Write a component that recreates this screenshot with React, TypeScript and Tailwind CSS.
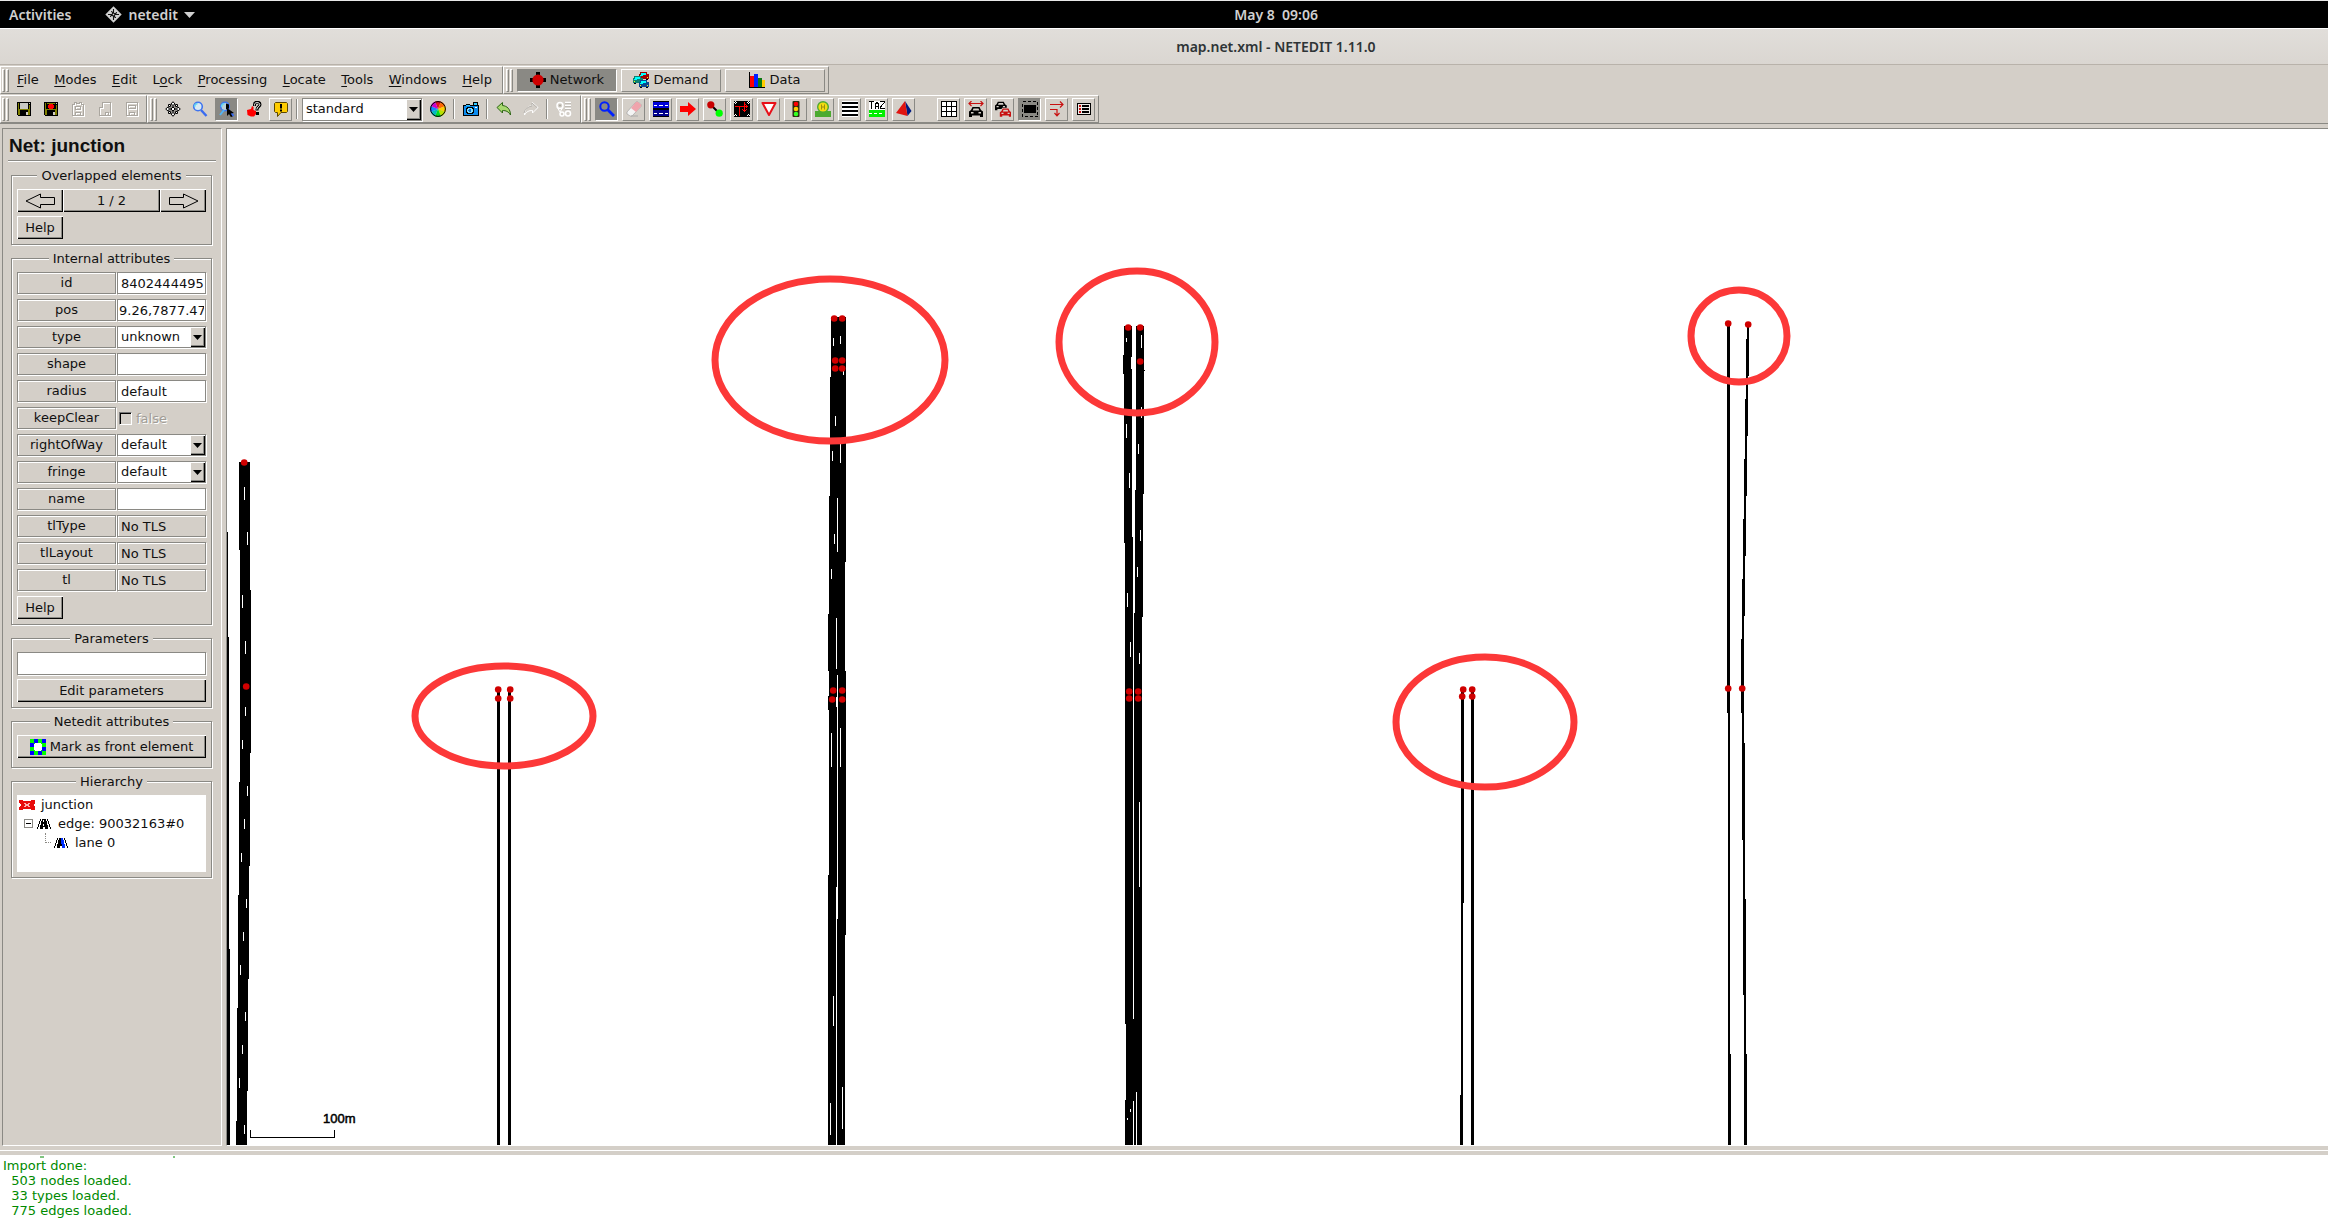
import React from "react";

type Kids = { children?: React.ReactNode };
type Box = [number, number, number, number];
type Edge = [number, number][];

const groove = "border border-[#8a8984] shadow-[inset_1px_1px_0_#fff,1px_1px_0_#fff]";
const sunken = "border border-[#8a8984] shadow-[1px_1px_0_#fff]";
const raised =
  "bg-[#d4cfc8] shadow-[inset_1px_1px_0_#fff,inset_-1px_-1px_0_#000,inset_-2px_-2px_0_#8a8984]";
const bar =
  "flex items-center border border-t-white border-l-white border-r-[#8a8984] border-b-[#8a8984] h-7";

/* ---------- icons ---------- */

function Ico({ children, w = 16, h = 16, smooth = false }: Kids & { w?: number; h?: number; smooth?: boolean }) {
  return (
    <svg
      width={w}
      height={h}
      viewBox={`0 0 ${w} ${h}`}
      shapeRendering={smooth ? "auto" : "crispEdges"}
      fill="none"
      className="shrink-0"
      aria-hidden="true"
    >
      {children}
    </svg>
  );
}

const SaveIcon = ({ red = false }: { red?: boolean }) => (
  <Ico>
    <path d="M1 1h14v14H2l-1-1z" fill="#000" />
    <path d="M2 2h1v12H2zM13 4h1v10h-1zM3 8h10v1H3zM3 9h1v5H3zM12 9h1v5h-1z" fill="#808000" />
    <path d="M4 2h8v6H4z" fill={red ? "#808000" : "#c9c9c4"} />
    {red && <path d="M4 3h2v1h4V3h2v5h-2V7H6v1H4z" fill="#000" />}
    {red && <path d="M6 3h4v1h1v3h-1v1H6V7H5V4h1z" fill="#f00" />}
    <path d="M10 11h2v3h-2z" fill="#d4cfc8" />
    <path d="M13 2h1v1h-1z" fill="#c9c9c4" />
  </Ico>
);

const ghostShapes = [
  "M2.5 3.5h2v-2h2v1h3v-1h2v2h2v11h-11zM5.5 5.5h5v3h-5zM5.5 14v-3h5v3",
  "M5.5 1.5h8v13h-11v-8h3zM8.5 13.5v-2h3v2",
  "M2.5 1.5h11v13h-11zM4.5 4.5h7v3h-7zM5.5 14v-3h5v3",
];

const GhostSave = ({ kind }: { kind: number }) => (
  <Ico>
    <path d={ghostShapes[kind]} stroke="#fff" transform="translate(1 1)" />
    <path d={ghostShapes[kind]} stroke="#aaa69f" />
  </Ico>
);

const MoveIcon = () => (
  <Ico smooth>
    <g fill="#fff" stroke="#000">
      <path d="M3.500 3.500h2v2h-2zM10.500 3.500h2v2h-2zM3.500 10.500h2v2h-2zM10.500 10.500h2v2h-2z" />
      <path d="M8 .7l2 2.300-1.200.5V6.500h-1.600V3.500L6 3zM8 15.300L10 13l-1.200-.5V9.500h-1.600v3L6 13zM.7 8L3 6l.5 1.200h3v1.600h-3L3 10zM15.300 8L13 6l-.5 1.200h-3v1.600h3L13 10z" />
      <path d="M8 6l2 2-2 2-2-2z" />
    </g>
  </Ico>
);

const LensIcon = ({ arrow = false }: { arrow?: boolean }) => (
  <Ico smooth>
    <path d="M9 9l5.500 6" stroke="#3a6cf0" strokeWidth="2.400" />
    <circle cx="6" cy="5.500" r="4.300" fill={arrow ? "#bcd0d8" : "#d8eaf4"} stroke="#3f74ee" strokeWidth="1.600" />
    <path d="M2.500 6a3.500 3.500 0 0 1 3-3.500" stroke="#62d4f4" strokeWidth="1.500" />
    {arrow && <path d="M1 14l4-5" stroke="#52b4f4" strokeWidth="2" />}
    {arrow && <path d="M7 2.500l3 1v4l-3 1z" fill="#000" />}
    {arrow && <path d="M8 7l7 5-3.300.5 2 3-1.800.5-1.900-3L8 15z" fill="#000" />}
  </Ico>
);

const QuestionIcon = () => (
  <Ico smooth>
    <path d="M8.500 5V3.500c0-3 5.500-3 5.500 0 0 2-3 2.500-3 5v1" stroke="#000" strokeWidth="3" />
    <path d="M8.500 4.500V3.500c0-2.500 5.300-2.500 5.300 0 0 2-3 2.500-3 5" stroke="#fff" strokeWidth="1" />
    <rect x="10" y="11" width="3" height="3" fill="#000" />
    <path d="M1 9l4-1 1-3 1.500 1v3L10 10v3l-2 2.500H5L1.500 14z" fill="#f00" />
  </Ico>
);

const MessageIcon = () => (
  <Ico smooth>
    <path d="M2.500 1.500h11l1 1v8l-1 1H8l-3.500 4v-4h-2l-1-1v-8z" fill="#fc0" stroke="#5a4600" />
    <path d="M7 3h2v4.500H7zM7 8.500h2v2H7z" fill="#000" />
  </Ico>
);

const wheel: [string, string][] = [
  ["M8 8L5 .6A8 8 0 0 1 11 .6z", "#e01020"],
  ["M8 8L11 .6A8 8 0 0 1 15.400 5z", "#f60"],
  ["M8 8L15.400 5A8 8 0 0 1 15.400 11z", "#fc0"],
  ["M8 8L15.400 11A8 8 0 0 1 11 15.400z", "#b8e000"],
  ["M8 8L11 15.400A8 8 0 0 1 5 15.400z", "#0d2"],
  ["M8 8L5 15.400A8 8 0 0 1 .6 11z", "#0bb"],
  ["M8 8L.6 11A8 8 0 0 1 .6 5z", "#18f"],
  ["M8 8L.6 5A8 8 0 0 1 5 .6z", "#c0c"],
];

const WheelIcon = () => (
  <Ico smooth>
    {wheel.map(([d, c]) => (
      <path key={c} d={d} fill={c} />
    ))}
    <circle cx="8" cy="8" r="7.400" stroke="#000" />
  </Ico>
);

const CameraIcon = () => (
  <Ico>
    <path d="M0 4h3V3h4v1h3V1h5v3h1v11H0z" fill="#000" />
    <path d="M1 5h14v9H1z" fill="#0a8cf0" />
    <path d="M11 2h3v2h-3zM3 4h4v1H3z" fill="#30c8ff" />
    <circle cx="7" cy="9.500" r="4" fill="#000" />
    <circle cx="7" cy="9.500" r="3" fill="#7fe0ff" />
    <circle cx="7" cy="9.500" r="1.500" fill="#0a6cd0" />
    <path d="M12 6h2v1h-2z" fill="#fff" />
  </Ico>
);

const UndoIcon = ({ ghost = false }: { ghost?: boolean }) => (
  <Ico smooth>
    <path
      d={
        ghost
          ? "M15 6.500L9.500 1.500v3C5 5 1.500 8 1.500 14c2-3.500 4.500-4.500 8-4.500v2.500z"
          : "M1 6.500L6.500 1.500v3c4.500.5 8 3.500 8 9.500-2-3.500-4.500-4.500-8-4.500v2.500z"
      }
      fill={ghost ? "#d4cfc8" : "#a8d870"}
      stroke={ghost ? "#fff" : "#2c6414"}
    />
    {ghost && <path d="M14 6.500L9 2v3C5 5.500 2 8 1 12" stroke="#b4b0aa" />}
  </Ico>
);

const GearsIcon = () => (
  <Ico smooth>
    <circle cx="4" cy="4.500" r="3" stroke="#fff" strokeWidth="1.500" />
    <circle cx="4" cy="4.500" r="1" fill="#aaa6a0" />
    <path d="M1 6l3 5 3-5" stroke="#fff" />
    <circle cx="12" cy="12.500" r="2.500" stroke="#fff" strokeWidth="1.500" />
    <circle cx="6" cy="13" r="2" stroke="#fff" strokeWidth="1.500" />
    <path d="M9 1.500h6M9 4.500h6M9 7.500h6" stroke="#fff" strokeWidth="1.500" />
    <path d="M9 2.500h6M9 5.500h6M9 8.500h6" stroke="#aaa6a0" strokeWidth=".6" />
  </Ico>
);

const InspectIcon = () => (
  <Ico smooth>
    <circle cx="5.500" cy="5.500" r="4.200" stroke="#0020ff" strokeWidth="2" />
    <path d="M8.500 8.500l6.500 6.500" stroke="#0020ff" strokeWidth="2.800" />
  </Ico>
);

const EraserIcon = () => (
  <Ico smooth>
    <path
      d="M1 11L9.500 1.500c1-1 2-1 3 0l2 1.500c1 1 1 2 0 3L6.500 14.500c-.8.800-2 .8-3 0L1 13z"
      fill="#f4f4f4"
      stroke="#999"
      strokeWidth=".6"
    />
    <path d="M5 7l4.500-5.500c1-1 2-1 3 0l2 1.500c1 1 1 2 0 3L10 11z" fill="#f0a4ac" />
    <path d="M5 15h7" stroke="#aaa" />
  </Ico>
);

const EdgeIcon = () => (
  <Ico>
    <rect width="16" height="16" fill="#000" />
    <path d="M0 1h16v6H0z" fill="#0000d8" />
    <path d="M0 9h16v6H0z" fill="#00008c" />
    <path d="M1 4h3v1H1zM6 4h4v1H6zM12 4h3v1h-3zM1 12h3v1H1zM6 12h4v1H6zM12 12h3v1h-3z" fill="#fff" />
  </Ico>
);

const ArrowIcon = () => (
  <Ico smooth>
    <path d="M0 5h8V1l8 7-8 7v-4H0z" fill="#f00" />
  </Ico>
);

const ConnectIcon = () => (
  <Ico smooth>
    <path d="M4 4l8 8" stroke="#000" strokeWidth="2" />
    <circle cx="3.800" cy="3.800" r="3.600" fill="#c80000" />
    <circle cx="12.200" cy="12.200" r="3.600" fill="#0f0" />
  </Ico>
);

const ProhibitIcon = () => (
  <Ico>
    <path d="M0 0h16v16H0z" fill="#000" />
    <path
      d="M1 0h1v1H1zM0 1h1v1H0zM2 1h1v1H2zM1 2h1v1H1zM14 0h1v1h-1zM13 1h1v1h-1zM15 1h1v1h-1zM14 2h1v1h-1zM1 13h1v1H1zM0 14h1v1H0zM2 14h1v1H2zM14 13h1v1h-1zM13 14h1v1h-1zM15 14h1v1h-1z"
      fill="#fff"
    />
    <path d="M1 5.500h13M11.500 3.500l2 2-2 2M5.500 15V6M10.500 1v9M8.500 8.500l2 2 2-2" stroke="#f00" />
  </Ico>
);

const YieldIcon = () => (
  <Ico smooth>
    <path d="M1.500 2h13L8 14z" fill="#fff" stroke="#e81018" strokeWidth="2" strokeLinejoin="round" />
  </Ico>
);

const LightIcon = () => (
  <Ico smooth>
    <rect x="4.500" width="7" height="16" rx="1" fill="#2a2a10" />
    <circle cx="8" cy="3" r="2.300" fill="#f00" />
    <circle cx="8" cy="8" r="2.300" fill="#fc0" />
    <circle cx="8" cy="13" r="2.300" fill="#3f2" />
  </Ico>
);

const StopIcon = () => (
  <Ico smooth>
    <path d="M0 10h16v6H0z" fill="#4caa30" />
    <circle cx="8" cy="6" r="6" fill="#4caa30" />
    <circle cx="8" cy="6" r="4.600" fill="#f4dc10" />
    <path d="M6.500 3.500v5M9.500 3.500v5M6.500 6h3" stroke="#9c9010" />
  </Ico>
);

const LinesIcon = () => (
  <Ico>
    <rect width="16" height="16" fill="#fff" />
    <path d="M0 1h16v2H0zM0 5h16v2H0zM0 9h16v2H0zM0 13h16v2H0z" fill="#000" />
  </Ico>
);

const TazIcon = () => (
  <Ico>
    <rect width="16" height="16" fill="#fff" />
    <path d="M0 .5h5M2.500 1v7M6.500 8V3.500l1-2h1l1 2V8M6.500 5.500h3M11 .5h4.500v1L11.500 6v1.500H16" stroke="#000" />
    <path d="M0 9h16v7H0z" fill="#0e0" />
    <path d="M0 12h3v1H0zM5 12h3v1H5zM10 12h3v1h-3z" fill="#fff" />
  </Ico>
);

const ShapeIcon = () => (
  <Ico smooth>
    <path d="M9 0l6.500 10-4 5z" fill="#001a80" />
    <path d="M9 0L0 12l11.500 3z" fill="#e01410" />
  </Ico>
);

const GridIcon = () => (
  <Ico>
    <rect x=".5" y=".5" width="15" height="15" fill="#fff" stroke="#000" />
    <path d="M5.500 0v16M10.500 0v16M0 5.500h16M0 10.500h16" stroke="#000" />
  </Ico>
);

const CarPath =
  "M1 15V9.500L3 8l1.500-3h7L13 8l2 1.500V15h-3v-1.500H4V15zM5.500 6.500L4.700 8.500h6.600l-.8-2zM3 10v1.500h2.500V10zM10.500 10v1.500H13V10z";

const LaneCarIcon = () => (
  <Ico smooth>
    <path d="M1 2.500h14M3.500 0L1 2.500 3.500 5M12.500 0L15 2.500 12.500 5" stroke="#c81010" strokeWidth="1.200" />
    <path d={CarPath} transform="translate(0 1)" fill="#000" fillRule="evenodd" />
  </Ico>
);

const TwoCarsIcon = () => (
  <Ico smooth>
    <path d={CarPath} transform="translate(-1 -3.500) scale(.85)" fill="#000" fillRule="evenodd" />
    <path d={CarPath} transform="translate(4 3.500) scale(.82)" fill="#d4cfc8" stroke="#d4cfc8" strokeWidth="2" />
    <path d={CarPath} transform="translate(4 3.500) scale(.82)" fill="#c81010" fillRule="evenodd" />
  </Ico>
);

const SelectIcon = () => (
  <Ico>
    <rect x=".5" y=".5" width="15" height="15" stroke="#000" strokeDasharray="3 2" />
    <rect x="2" y="4" width="12" height="8" fill="#000" />
  </Ico>
);

const TurnIcon = () => (
  <Ico smooth>
    <path d="M1 3.500h13M11 .5l3 3-3 3M1 8.500h7v6M5.500 12L8 14.800l2.500-2.800" stroke="#c81010" strokeWidth="1.200" />
  </Ico>
);

const ListIcon = () => (
  <Ico>
    <path d="M1 2h14v12H1z" fill="#000" />
    <path d="M2 3h12v10H2z" fill="#f0ece8" />
    <path d="M3 4h2v2H3zM3 7h2v2H3zM3 10h2v2H3z" fill="#c81010" />
    <path d="M6 4h7v2H6zM6 7h7v2H6zM6 10h7v2H6z" fill="#000" />
  </Ico>
);

const NetworkIcon = () => (
  <Ico smooth>
    <path d="M6 0h4v16H6zM0 6h16v4H0z" fill="#000" />
    <circle cx="8" cy="8" r="5.600" fill="#d00000" />
  </Ico>
);

const MiniCar = ({ x, y, c }: { x: number; y: number; c: string }) => (
  <g transform={`translate(${x} ${y})`}>
    <path d="M1 0h7v2h2v5H9v1H7V7H3v1H1V7H0V2h1z" fill={c} />
    <path d="M2 1h5v2H2zM1 3h3v1H1z" fill="#0ff" />
    <path d="M1 5h1v1H1zM8 5h1v1H8z" fill="#ff0" />
    <path d="M1 7h2v1H1zM7 7h2v1H7z" fill="#000" />
  </g>
);

const DemandIcon = () => (
  <Ico>
    <MiniCar x={6} y={0} c="#a00000" />
    <MiniCar x={0} y={4} c="#0c8070" />
    <MiniCar x={6} y={8} c="#0c4890" />
  </Ico>
);

const DataIcon = () => (
  <Ico>
    <path d="M1 4h4v11H1z" fill="#f00" />
    <path d="M5 2h4v13H5z" fill="#0020ff" />
    <path d="M9 6h4v9H9z" fill="#0a7a10" />
    <path d="M13 8h3v7h-3z" fill="#fc0" />
    <path d="M.5 0v15.500H16" stroke="#000" />
  </Ico>
);

const FrontIcon = () => (
  <Ico>
    <path d="M0 0h16v16H0z" fill="#0f0" />
    <path d="M4 0h4v4H4zM12 0h4v4h-4zM0 4h4v4H0zM12 8h4v4h-4zM0 12h4v4H0zM8 12h4v4H8z" fill="#00f" />
    <path d="M5 4h6v1h1v6h-1v1H5v-1H4V5h1z" fill="#fff" />
  </Ico>
);

const JunctionIcon = () => (
  <Ico h={12}>
    <path d="M0 1h3l2 1h6l2-1h3v3l-2 2 2 2v3h-3l-2-1H5l-2 1H0V8l2-2-2-2z" fill="#e80c0c" />
    <path d="M5 4l6 4M11 4L5 8" stroke="#ffb0b0" />
    <path d="M0 5h1v2H0zM15 5h1v2h-1z" fill="#fff" />
  </Ico>
);

const RoadIcon = ({ lane = false }: { lane?: boolean }) => (
  <Ico w={14} h={12}>
    <path d="M3 1h1v2H3v3H2v3H1v2H0V9h1V6h1V3h1zM10 1h1v2h1v3h1v3h1v2h-1V9h-1V6h-1V3h-1z" fill="#000" />
    <path d="M5 1h4v2h1v4h1v4H8V9H6v2H3V7h1V3h1z" fill="#000" />
    {lane && <path d="M7 1h2v2h1v4h1v4H8V7H7z" fill="#0030ff" />}
    {!lane && <path d="M6 2h1v2H6zM6 6h1v2H6z" fill="#fff" />}
  </Ico>
);

const Caret = () => (
  <svg width="9" height="5" viewBox="0 0 9 5" aria-hidden="true">
    <path d="M0 0h9L4.500 5z" fill="#000" />
  </svg>
);

const BigArrow = ({ flip = false }: { flip?: boolean }) => (
  <svg width="31" height="16" viewBox="0 0 31 16" className={flip ? "-scale-x-100" : ""} aria-hidden="true">
    <path d="M1 8L15.500 1v3.500h14v7h-14V15z" fill="none" stroke="#000" />
  </svg>
);

/* ---------- tool bars ---------- */

const Grip = () => (
  <div className="flex h-[23px] shrink-0 gap-px">
    <span className="w-[3px] border border-t-white border-l-white border-r-[#8a8984] border-b-[#8a8984]" />
    <span className="w-[3px] border border-t-white border-l-white border-r-[#8a8984] border-b-[#8a8984]" />
  </div>
);

const Sep = () => <span className="h-5 w-0.5 border-l border-[#8a8984] bg-white" />;

type ToolProps = Kids & { label: string; look?: "flat" | "up" | "down" };

function Tool({ label, look = "flat", children }: ToolProps) {
  const style =
    look === "down"
      ? "bg-[#8a8984] border-t-[#8a8984] border-l-[#8a8984] border-r-white border-b-white"
      : look === "up"
        ? "border-t-white border-l-white border-r-[#8a8984] border-b-[#8a8984]"
        : "border-transparent";
  return (
    <button type="button" aria-label={label} className={`flex size-[23px] shrink-0 items-center justify-center border ${style}`}>
      {children}
    </button>
  );
}

const menus: [string, string, string][] = [
  ["", "F", "ile"],
  ["", "M", "odes"],
  ["", "E", "dit"],
  ["L", "o", "ck"],
  ["", "P", "rocessing"],
  ["", "L", "ocate"],
  ["", "T", "ools"],
  ["", "W", "indows"],
  ["", "H", "elp"],
];

function ModeTab({ label, active = false, children }: Kids & { label: string; active?: boolean }) {
  return (
    <button
      type="button"
      className={`flex h-[23px] w-[100px] items-center justify-center gap-1 border ${
        active
          ? "border-t-[#8a8984] border-l-[#8a8984] border-r-white border-b-white bg-[#8a8984]"
          : "border-t-white border-l-white border-r-[#8a8984] border-b-[#8a8984]"
      }`}
    >
      {children}
      {label}
    </button>
  );
}

const modes: [string, React.ReactNode][] = [
  ["Inspect", <InspectIcon />],
  ["Delete", <EraserIcon />],
  ["Edge", <EdgeIcon />],
  ["Move", <ArrowIcon />],
  ["Connection", <ConnectIcon />],
  ["Prohibition", <ProhibitIcon />],
  ["Crossing priority", <YieldIcon />],
  ["Traffic light", <LightIcon />],
  ["Additional", <StopIcon />],
  ["Crossing", <LinesIcon />],
  ["TAZ", <TazIcon />],
  ["Shape", <ShapeIcon />],
];

const toggles: [string, React.ReactNode][] = [
  ["Grid", <GridIcon />],
  ["Draw spread", <LaneCarIcon />],
  ["Show demand", <TwoCarsIcon />],
  ["Select edges", <SelectIcon />],
  ["Show connections", <TurnIcon />],
  ["Show additionals", <ListIcon />],
];

function Toolbars() {
  return (
    <nav className="flex flex-col gap-px border-b border-[#8a8984] pt-px">
      <div className="flex">
        <div className={`${bar} w-[503px] pl-px`}>
          <Grip />
          <div className="flex grow justify-between pr-2.5 pl-2">
            {menus.map(([a, b, c]) => (
              <button type="button" key={b + c}>
                {a}
                <span className="underline underline-offset-2">{b}</span>
                {c}
              </button>
            ))}
          </div>
        </div>
        <div className={`${bar} gap-1 pr-[3px] pl-0.5`}>
          <Grip />
          <ModeTab label="Network" active><NetworkIcon /></ModeTab>
          <ModeTab label="Demand"><DemandIcon /></ModeTab>
          <ModeTab label="Data"><DataIcon /></ModeTab>
        </div>
      </div>
      <div className="flex">
        <div className={`${bar} gap-[3px] pr-[3px] pl-px`}>
          <Grip />
          <div className="flex gap-1">
            <Tool label="Save network"><SaveIcon /></Tool>
            <Tool label="Save as"><SaveIcon red /></Tool>
            <Tool label="Save additionals"><GhostSave kind={0} /></Tool>
            <Tool label="Save demand"><GhostSave kind={1} /></Tool>
            <Tool label="Save data"><GhostSave kind={2} /></Tool>
          </div>
        </div>
        <div className={`${bar} gap-1 pr-[5px] pl-0.5`}>
          <Grip />
          <div className="flex items-center gap-1">
            <Tool label="Recenter"><MoveIcon /></Tool>
            <Tool label="Zoom style"><LensIcon /></Tool>
            <Tool label="Object tooltip" look="down"><LensIcon arrow /></Tool>
            <Tool label="Locate"><QuestionIcon /></Tool>
            <Tool label="Messages" look="up"><MessageIcon /></Tool>
            <Sep />
            <Combo label="View scheme" value="standard" wide />
            <Tool label="Colors"><WheelIcon /></Tool>
            <Sep />
            <Tool label="Snapshot"><CameraIcon /></Tool>
            <Sep />
            <Tool label="Undo"><UndoIcon /></Tool>
            <Tool label="Redo"><UndoIcon ghost /></Tool>
            <Sep />
            <Tool label="Compute"><GearsIcon /></Tool>
          </div>
        </div>
        <div className={`${bar} gap-1 pr-[3px] pl-0.5`}>
          <Grip />
          <div className="flex gap-1">
            {modes.map(([label, icon], i) => (
              <Tool key={label} label={label} look={i === 0 ? "down" : "up"}>{icon}</Tool>
            ))}
            <span className="w-3.5" />
            {toggles.map(([label, icon], i) => (
              <Tool key={label} label={label} look={i === 3 ? "down" : "up"}>{icon}</Tool>
            ))}
          </div>
        </div>
      </div>
    </nav>
  );
}

/* ---------- side panel ---------- */

function Combo({ id, label, value, wide = false }: { id?: string; label?: string; value: string; wide?: boolean }) {
  return (
    <div className={`relative flex bg-white ${sunken} ${wide ? "h-[23px] w-[120px]" : "h-[22px] w-full"}`}>
      <select id={id} aria-label={label} defaultValue={value} className="w-full appearance-none bg-transparent pl-[3px] outline-none">
        <option>{value}</option>
      </select>
      <span className={`pointer-events-none absolute inset-y-0 right-0 flex w-[15px] items-center justify-center ${raised}`}>
        <Caret />
      </span>
    </div>
  );
}

function Group({ title, children }: Kids & { title: string }) {
  return (
    <fieldset className={`min-w-0 px-[5px] pt-[6px] pb-[5px] ${groove}`}>
      <legend className="mx-auto h-4 bg-[#d4cfc8] px-1 leading-[18px]">{title}</legend>
      <div className="flex flex-col gap-1">{children}</div>
    </fieldset>
  );
}

const PushButton = ({ children, width = "w-full", label }: Kids & { width?: string; label?: string }) => (
  <button type="button" aria-label={label} className={`flex h-[23px] items-center justify-center gap-1 ${width} ${raised}`}>
    {children}
  </button>
);

type Attr = { name: string; kind: "text" | "select" | "check" | "fixed"; value: string };

const attrs: Attr[] = [
  { name: "id", kind: "text", value: "8402444495" },
  { name: "pos", kind: "text", value: "9.26,7877.47" },
  { name: "type", kind: "select", value: "unknown" },
  { name: "shape", kind: "text", value: "" },
  { name: "radius", kind: "text", value: "default" },
  { name: "keepClear", kind: "check", value: "false" },
  { name: "rightOfWay", kind: "select", value: "default" },
  { name: "fringe", kind: "select", value: "default" },
  { name: "name", kind: "text", value: "" },
  { name: "tlType", kind: "fixed", value: "No TLS" },
  { name: "tlLayout", kind: "fixed", value: "No TLS" },
  { name: "tl", kind: "fixed", value: "No TLS" },
];

function AttrRow({ name, kind, value }: Attr) {
  return (
    <div className="grid h-[23px] grid-cols-[99px_1fr] gap-px">
      <label htmlFor={`attr-${name}`} className={`flex h-[22px] items-center justify-center ${groove}`}>
        {name}
      </label>
      {kind === "select" && <Combo id={`attr-${name}`} value={value} />}
      {(kind === "text" || kind === "fixed") && (
        <input
          id={`attr-${name}`}
          defaultValue={value}
          readOnly={kind === "fixed"}
          className={`h-[22px] w-full min-w-0 outline-none ${kind === "fixed" ? groove : `bg-white ${sunken}`} ${
            name === "pos" ? "px-px text-right" : "pl-[3px]"
          }`}
        />
      )}
      {kind === "check" && (
        <span className="flex items-center gap-1 pl-0.5 text-[#a09c96] [text-shadow:1px_1px_0_#fff]">
          <input
            id={`attr-${name}`}
            type="checkbox"
            disabled
            className="size-[13px] appearance-none border border-t-[#777] border-l-[#777] border-r-white border-b-white bg-[#d4cfc8] shadow-[inset_1px_1px_0_#000]"
          />
          {value}
        </span>
      )}
    </div>
  );
}

function SidePanel() {
  return (
    <aside className="flex w-[220px] shrink-0 flex-col border border-t-[#8a8984] border-l-[#8a8984] border-r-white border-b-white px-[5px]">
      <h1 className="h-8 border-b border-[#8a8984] pl-px font-['Liberation_Sans',sans-serif] text-[19px] leading-[34px] font-bold shadow-[0_1px_0_#fff]">
        Net: junction
      </h1>
      <div className="flex flex-col gap-[5px] pt-[6px] pr-[4px] pl-[3px]">
        <Group title="Overlapped elements">
          <div className="flex">
            <PushButton width="w-[46px]" label="Previous element"><BigArrow /></PushButton>
            <PushButton width="grow">1 / 2</PushButton>
            <PushButton width="w-[46px]" label="Next element"><BigArrow flip /></PushButton>
          </div>
          <PushButton width="w-[46px]">Help</PushButton>
        </Group>
        <Group title="Internal attributes">
          {attrs.map((a) => (
            <AttrRow key={a.name} {...a} />
          ))}
          <PushButton width="w-[46px]">Help</PushButton>
        </Group>
        <Group title="Parameters">
          <input aria-label="Parameters" className={`h-[23px] w-full bg-white pl-[3px] outline-none ${sunken}`} />
          <PushButton>Edit parameters</PushButton>
        </Group>
        <Group title="Netedit attributes">
          <div className="pb-1">
            <PushButton>
              <FrontIcon />
              Mark as front element
            </PushButton>
          </div>
        </Group>
        <Group title="Hierarchy">
          <ul className="h-[77px] bg-white leading-[19px]">
            <li className="flex items-center gap-1.5 pl-0.5"><JunctionIcon />junction</li>
            <li className="flex items-center gap-1 pl-[7px]">
              <span className="flex size-[9px] items-center justify-center border border-[#8a8984]">
                <span className="h-px w-[5px] bg-black" />
              </span>
              <RoadIcon />
              <span className="pl-[3px]">edge: 90032163#0</span>
            </li>
            <li className="flex items-center gap-[7px] pl-[28px]">
              <span className="-mt-2.5 h-2.5 w-1.5 border-b border-l border-dotted border-[#8a8984]" />
              <span className="-ml-1"><RoadIcon lane /></span>
              lane 0
            </li>
          </ul>
        </Group>
      </div>
    </aside>
  );
}

/* ---------- network canvas ---------- */

/* Each band lists [x, yEnd] steps for its left and right border. */
function bandPath(top: number, left: Edge, right: Edge) {
  let d = `M${left[0][0]} ${top}`;
  left.forEach(([x, y]) => (d += `H${x}V${y}`));
  [...right].reverse().forEach(([x], i, all) => {
    const next = all[i + 1];
    const up = next ? right[right.length - 2 - i][1] : top;
    d += `H${x}V${up}`;
  });
  return d + "Z";
}

const bands: [number, Edge, Edge][] = [
  [532, [[227, 1145]], [[228, 637], [229, 949], [230, 1145]]],
  [
    462,
    [[239, 550], [240, 782], [239, 895], [238, 1008], [237, 1121], [236, 1145]],
    [[250, 590], [251, 753], [250, 866], [249, 979], [248, 1091], [247, 1145]],
  ],
  [689, [[497, 1145]], [[500, 1145]]],
  [689, [[508, 1145]], [[511, 1145]]],
  [
    317,
    [[831, 377], [830, 496], [829, 614], [828, 671], [829, 696], [828, 710], [829, 875], [828, 1145]],
    [[846, 562], [845, 671], [846, 935], [845, 1145]],
  ],
  [
    326,
    [[1124, 355], [1123, 374], [1124, 543], [1125, 1019]],
    [[1132, 357], [1131, 369], [1132, 537], [1133, 1019]],
  ],
  [326, [[1136, 490], [1135, 613], [1134, 1019]], [[1144, 494], [1143, 617], [1142, 1019]]],
  [1019, [[1125, 1024], [1126, 1100], [1125, 1145]], [[1142, 1145]]],
  [370, [[1144, 371]], [[1145, 371]]],
  [690, [[1461, 1095], [1460, 1145]], [[1464, 903], [1463, 1145]]],
  [690, [[1471, 1145]], [[1474, 1145]]],
  [324, [[1727, 713], [1728, 1145]], [[1730, 1054], [1731, 1145]]],
  [
    324,
    [[1747, 339], [1746, 399], [1745, 459], [1744, 519], [1743, 579], [1742, 639], [1741, 713], [1742, 840], [1743, 995], [1744, 1145]],
    [[1749, 376], [1748, 436], [1747, 496], [1746, 556], [1745, 616], [1744, 743], [1745, 899], [1746, 1054], [1747, 1145]],
  ],
];

/* Lane markings: x, y from, y to, width. */
const marks: Box[] = [
  [244, 487, 500, 1], [247, 532, 545, 1], [242, 595, 608, 1], [245, 641, 654, 1],
  [245, 707, 716, 1], [242, 740, 749, 1], [247, 786, 796, 1], [244, 819, 829, 1],
  [241, 853, 862, 1], [246, 899, 908, 1], [243, 932, 941, 1], [240, 965, 975, 1],
  [245, 1012, 1021, 1], [242, 1045, 1054, 1], [239, 1078, 1088, 1], [244, 1125, 1134, 1],
  [833, 338, 346, 1], [840, 336, 344, 1], [843, 371, 375, 1], [835, 416, 426, 1],
  [832, 451, 461, 1], [840, 444, 463, 1], [837, 498, 552, 1], [834, 534, 544, 1],
  [831, 569, 579, 1], [836, 618, 669, 1], [837, 675, 919, 1], [836, 697, 707, 2],
  [836, 887, 1145, 1], [831, 733, 767, 1], [840, 728, 767, 1], [833, 996, 1026, 1],
  [830, 1103, 1135, 1], [842, 1087, 1129, 1],
  [1126, 338, 342, 1], [1141, 335, 348, 1], [1141, 407, 418, 1], [1126, 424, 438, 1],
  [1138, 444, 454, 1], [1129, 473, 488, 1], [1140, 530, 541, 1], [1137, 567, 577, 1],
  [1127, 593, 607, 1], [1130, 642, 657, 1], [1139, 653, 664, 1], [1139, 802, 887, 1],
  [1130, 1109, 1112, 1], [1127, 1118, 1120, 1], [1133, 1101, 1145, 1], [1136, 1092, 1145, 1],
];

const nodes: [number, number][] = [
  [244, 462], [246, 686],
  [498, 689], [498, 698], [510, 689], [510, 698],
  [834, 318], [842, 318], [835, 360], [842, 360], [835, 368], [842, 368],
  [833, 690], [842, 690], [832, 699], [842, 699],
  [1128, 327], [1140, 327], [1140, 361], [1129, 691], [1138, 691], [1129, 698], [1138, 698],
  [1463, 689], [1462, 696], [1472, 689], [1472, 696],
  [1728, 323], [1748, 324], [1728, 688], [1742, 688],
];

const rings: Box[] = [
  [504, 716, 89, 50],
  [830, 360, 115, 81],
  [1137, 342, 78, 71],
  [1485, 722, 89, 65],
  [1739, 336, 48, 46],
];

function NetworkView() {
  return (
    <main className="ml-1 min-w-0 grow border border-r-0 border-t-[#8a8984] border-l-[#8a8984] border-b-white bg-white">
      <svg className="block h-full w-full" role="img" aria-label="Road network">
        <g transform="translate(-227 -129)">
          <g shapeRendering="crispEdges">
            {bands.map(([top, l, r], i) => (
              <path key={i} d={bandPath(top, l, r)} fill="#000" />
            ))}
            {marks.map(([x, y, end, w], i) => (
              <rect key={i} x={x} y={y} width={w} height={end - y} fill="#fff" />
            ))}
            <path d="M250.500 1130v7.500h84V1130" fill="none" stroke="#000" />
          </g>
          {nodes.map(([x, y], i) => (
            <circle key={i} cx={x + 0.2} cy={y + 0.5} r="3.300" fill="#d00000" />
          ))}
          <text x="323" y="1123" fontSize="13" stroke="#000" strokeWidth=".5" fontFamily="Liberation Sans, sans-serif">
            100m
          </text>
          {rings.map(([x, y, rx, ry]) => (
            <ellipse key={x} cx={x} cy={y} rx={rx} ry={ry} fill="none" stroke="#fc3838" strokeWidth="7" />
          ))}
        </g>
      </svg>
    </main>
  );
}

/* ---------- window ---------- */

export default function App() {
  return (
    <div className="flex h-screen flex-col overflow-hidden bg-[#d4cfc8] font-['DejaVu_Sans',sans-serif] text-[13px] leading-4 text-[#101010]">
      <div className="grid h-7 grid-cols-[1224fr_auto_1009fr] items-center border-t border-[#e8e8e8] bg-black pl-[9px] font-['Noto_Sans',sans-serif] text-[14px] font-semibold text-[#d0d0d0]">
        <div className="flex items-center">
          <button type="button">Activities</button>
          <button type="button" className="ml-[34px] flex items-center gap-1.5">
            <Ico w={17} h={17} smooth>
              <path d="M8.500 .3l8.200 8.200-8.200 8.200L.3 8.500z" fill="#d0d0d0" />
              <path
                d="M8.500 3v4M8.500 10v4M3 8.500h4M10 8.500h4M6 5.500c2 0 2 2 1 3M11 11.500c-2 0-2-2-1-3M11.500 6c0 2-2 2-3 1M5.500 11c0-2 2-2 3-1"
                stroke="#111"
                strokeWidth="1.100"
              />
            </Ico>
            netedit
            <svg width="11" height="6" viewBox="0 0 11 6" aria-hidden="true">
              <path d="M0 0h11L5.500 6z" fill="#d0d0d0" />
            </svg>
          </button>
        </div>
        <span className="whitespace-pre">May 8  09:06</span>
      </div>
      <header className="grid h-[37px] grid-cols-[1177fr_auto_953fr] items-center border-t border-b border-t-white border-b-[#b8b2aa] bg-linear-to-b from-[#e1deda] to-[#dad6d1] font-['Noto_Sans',sans-serif] text-[14px] font-semibold text-[#2e3436]">
        <span className="col-start-2">map.net.xml - NETEDIT 1.11.0</span>
      </header>
      <Toolbars />
      <div className="flex min-h-0 grow pt-1 pl-0.5">
        <SidePanel />
        <NetworkView />
      </div>
      <footer className="mt-1 border-t border-white pt-1">
        <div className="h-[65px] bg-white pl-[3px] leading-[15px] text-[#008a00]">
          <svg width="180" height="3" className="block" aria-hidden="true">
            <path d="M37 2h4M170 2h2" stroke="#008a00" />
          </svg>
          <pre className="font-['DejaVu_Sans',sans-serif]">{"Import done:\n  503 nodes loaded.\n  33 types loaded.\n  775 edges loaded."}</pre>
        </div>
      </footer>
    </div>
  );
}
